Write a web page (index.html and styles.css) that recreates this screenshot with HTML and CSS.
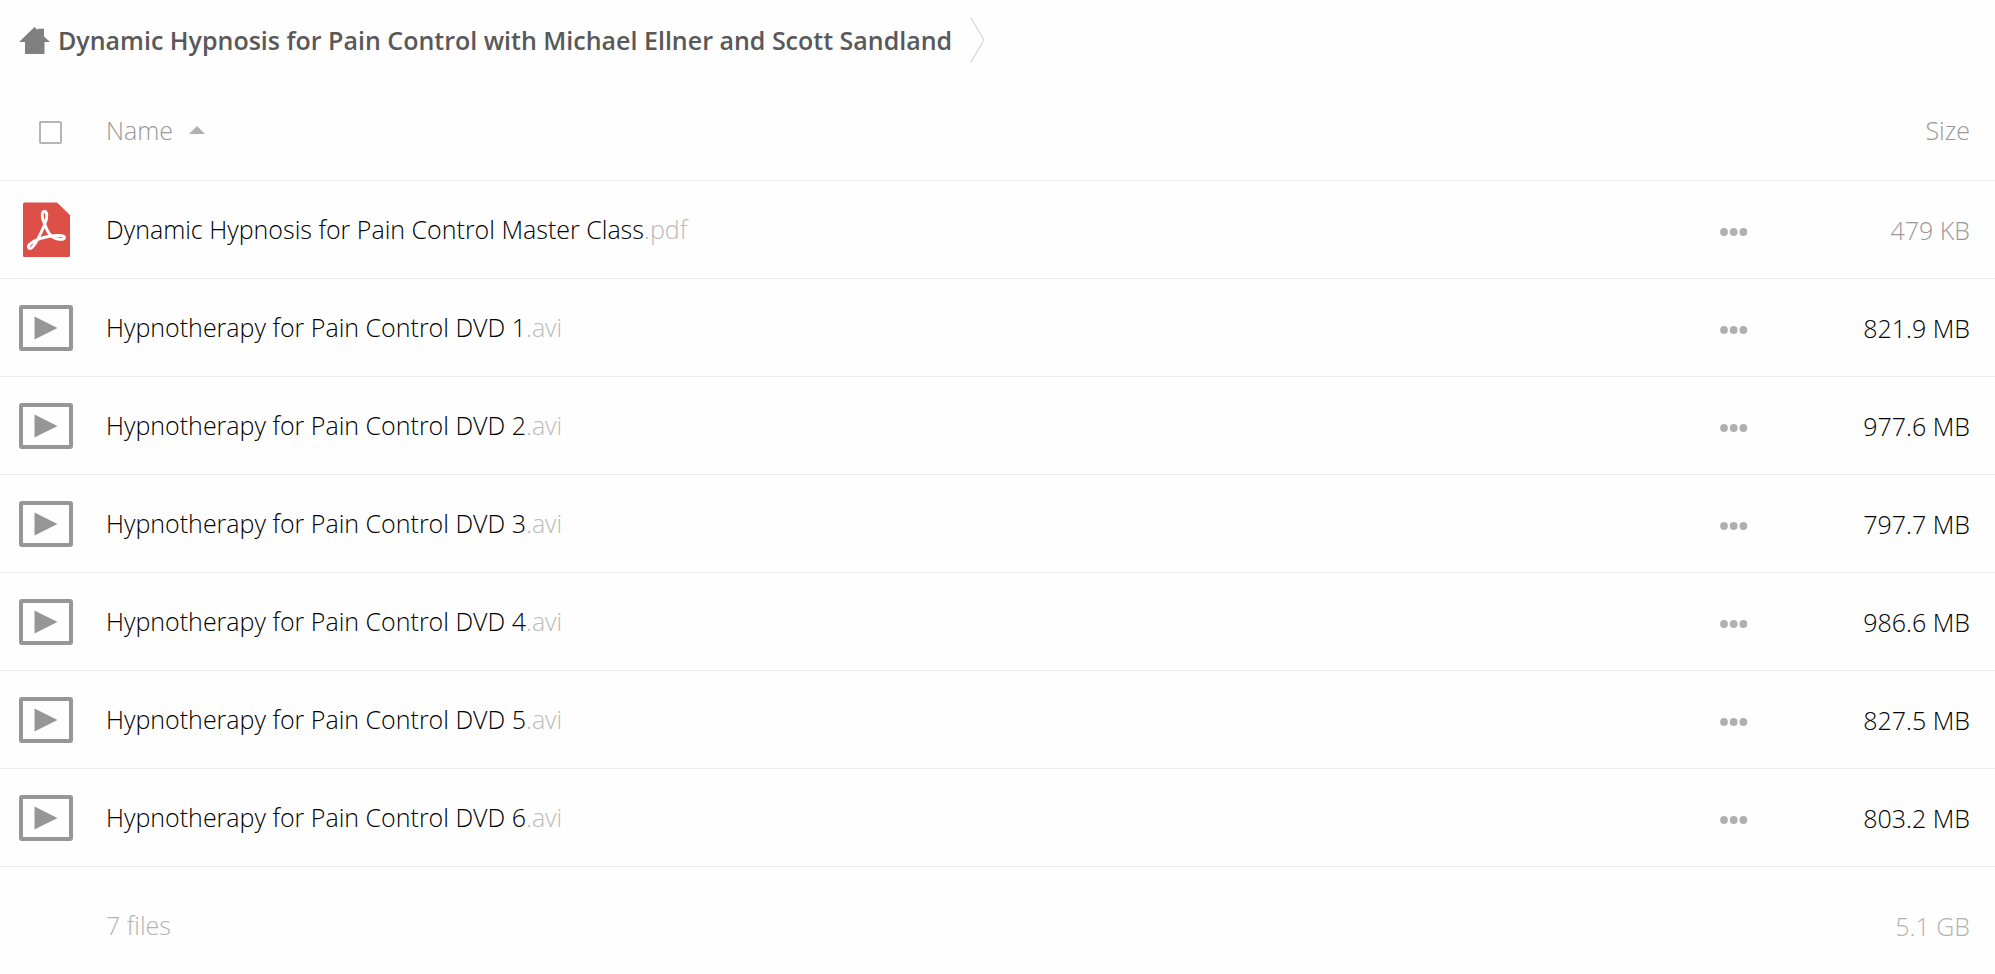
FILE: index.html
```html
<!DOCTYPE html>
<html lang="en">
<head>
<meta charset="utf-8">
<title>Dynamic Hypnosis for Pain Control</title>
<link rel="stylesheet" href="styles.css">
</head>
<body>
<svg class="sprite" aria-hidden="true">
  <symbol id="video" viewBox="0 0 54 46">
    <rect x="2" y="2" width="50" height="42" rx="1" fill="none" stroke="#969696" stroke-width="4"/>
    <path d="M15.500 11.500 38.500 23 15.500 34.500z" fill="#969696"/>
  </symbol>
  <symbol id="dots" viewBox="0 0 28 8">
    <circle cx="4" cy="4" r="3.900"/><circle cx="13.700" cy="4" r="3.900"/><circle cx="23.400" cy="4" r="3.900"/>
  </symbol>
</svg>
<nav class="crumbs" aria-label="Breadcrumb">
  <a class="crumb" href="#">
    <svg class="home" viewBox="0 0 31 27" aria-hidden="true"><path d="M15.500 0 18.800 3V1.700H25V9.500L31 15H25.500V27H6V15H0z" fill="#808080"/></svg>
    <span>Dynamic Hypnosis for Pain Control with Michael Ellner and Scott Sandland</span>
  </a>
  <svg class="chevron" viewBox="0 0 15 46" aria-hidden="true"><path d="M.5.5 14 23 .5 45.500" fill="none" stroke="#d6d6d6" stroke-width="1.200"/></svg>
</nav>
<main>
<table class="files">
  <thead>
    <tr>
      <th class="icon"><input class="check" type="checkbox" aria-label="Select all"></th>
      <th class="name"><button class="sort" type="button">Name <svg class="arrow" viewBox="0 0 16 8" aria-hidden="true"><path d="M0 8 8 0l8 8z" fill="#b0b0b0"/></svg></button></th>
      <th class="actions"></th>
      <th class="size">Size</th>
    </tr>
  </thead>
  <tbody>
    <tr>
      <td class="icon"><svg class="pdf" viewBox="0 0 47 55" aria-hidden="true"><path d="M1.500.5H34L47 13V53.500Q47 55 45.500 55H1.500Q0 55 0 53.500V2Q0 .5 1.500.5z" fill="#dc5047"/><path d="M21.500 21.500C18.500 16 18.500 9.500 21.500 9.500S24.500 16 21.700 22.500C18.500 30 13.500 41 9.500 45 6.500 48 4 45.500 6.500 42.500 11 37.500 23 34 33 33.500 39 33.200 42 34 41.500 35.800 40.500 38.500 33 37.500 29 34.500 25 31.500 23 26 21.500 21.500z" fill="none" stroke="#fff" stroke-width="2.900" stroke-linejoin="round"/></svg></td>
      <td class="name"><a href="#">Dynamic Hypnosis for Pain Control Master Class<span class="ext">.pdf</span></a></td>
      <td class="actions"><button class="more" type="button" aria-label="More"><svg><use href="#dots"/></svg></button></td>
      <td class="size small">479 KB</td>
    </tr>
    <tr>
      <td class="icon"><svg class="video"><use href="#video"/></svg></td>
      <td class="name"><a href="#">Hypnotherapy for Pain Control DVD 1<span class="ext">.avi</span></a></td>
      <td class="actions"><button class="more" type="button" aria-label="More"><svg><use href="#dots"/></svg></button></td>
      <td class="size">821.9 MB</td>
    </tr>
    <tr>
      <td class="icon"><svg class="video"><use href="#video"/></svg></td>
      <td class="name"><a href="#">Hypnotherapy for Pain Control DVD 2<span class="ext">.avi</span></a></td>
      <td class="actions"><button class="more" type="button" aria-label="More"><svg><use href="#dots"/></svg></button></td>
      <td class="size">977.6 MB</td>
    </tr>
    <tr>
      <td class="icon"><svg class="video"><use href="#video"/></svg></td>
      <td class="name"><a href="#">Hypnotherapy for Pain Control DVD 3<span class="ext">.avi</span></a></td>
      <td class="actions"><button class="more" type="button" aria-label="More"><svg><use href="#dots"/></svg></button></td>
      <td class="size">797.7 MB</td>
    </tr>
    <tr>
      <td class="icon"><svg class="video"><use href="#video"/></svg></td>
      <td class="name"><a href="#">Hypnotherapy for Pain Control DVD 4<span class="ext">.avi</span></a></td>
      <td class="actions"><button class="more" type="button" aria-label="More"><svg><use href="#dots"/></svg></button></td>
      <td class="size">986.6 MB</td>
    </tr>
    <tr>
      <td class="icon"><svg class="video"><use href="#video"/></svg></td>
      <td class="name"><a href="#">Hypnotherapy for Pain Control DVD 5<span class="ext">.avi</span></a></td>
      <td class="actions"><button class="more" type="button" aria-label="More"><svg><use href="#dots"/></svg></button></td>
      <td class="size">827.5 MB</td>
    </tr>
    <tr>
      <td class="icon"><svg class="video"><use href="#video"/></svg></td>
      <td class="name"><a href="#">Hypnotherapy for Pain Control DVD 6<span class="ext">.avi</span></a></td>
      <td class="actions"><button class="more" type="button" aria-label="More"><svg><use href="#dots"/></svg></button></td>
      <td class="size">803.2 MB</td>
    </tr>
  </tbody>
  <tfoot>
    <tr>
      <td class="icon"></td>
      <td class="name">7 files</td>
      <td class="actions"></td>
      <td class="size">5.1 GB</td>
    </tr>
  </tfoot>
</table>
</main>
</body>
</html>
```
FILE: styles.css
```css
* { box-sizing: border-box; }
body {
  margin: 0;
  background: #fefefe;
  color: #000;
  font: 300 25px/36px "Open Sans", "Noto Sans", sans-serif;
}
a { color: inherit; text-decoration: none; }
button { padding: 0; border: 0; background: none; color: inherit; font: inherit; }
svg { display: block; }
.sprite { position: absolute; width: 0; height: 0; }
.crumbs { display: flex; align-items: center; gap: 18px; height: 80px; padding-left: 19px; }
.crumb { display: flex; align-items: center; gap: 8px; color: #595959; font-weight: 600; }
.home { width: 31px; height: 27px; }
.chevron { width: 15px; height: 46px; }
.files { width: 100%; border-collapse: separate; border-spacing: 0; table-layout: fixed; }
th, td { height: 98px; padding: 0; border-bottom: 1px solid #ebebeb; text-align: left; vertical-align: middle; }
th { height: 101px; color: #999; font-weight: 300; }
.icon { width: 106px; padding-left: 19px; }
th.icon { padding-left: 39px; }
td.name { padding-bottom: 2px; }
.actions { width: 130px; }
.size { width: 145px; padding-right: 25px; text-align: right; }
.small { color: #999; }
.ext { color: #bbb; }
.check { display: block; appearance: none; width: 23px; height: 23px; margin: 4px 0 0; border: 2px solid #b5b5b5; border-radius: 2px; background: #fff; }
.sort { display: flex; align-items: center; gap: 16px; }
.arrow { width: 16px; height: 8px; }
.pdf { width: 47px; height: 55px; margin-left: 4px; }
.video { width: 54px; height: 46px; }
.more { display: block; padding: 4px 0 0; }
.more svg { width: 28px; height: 8px; fill: #b0b0b0; }
tfoot td { height: 117px; border: 0; color: #b3b3b3; }
```
